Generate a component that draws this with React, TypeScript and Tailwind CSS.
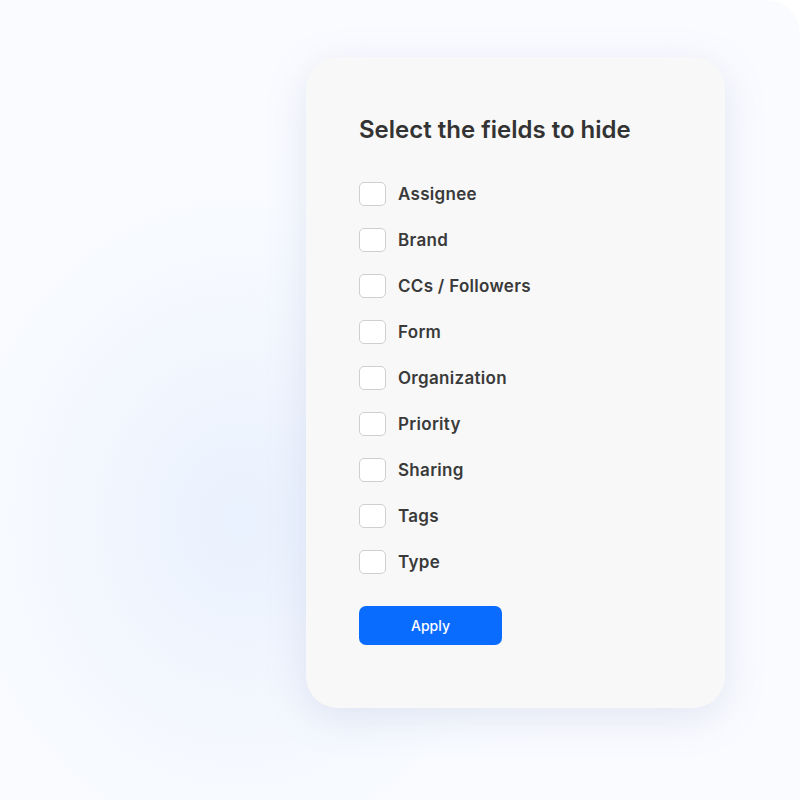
import React from "react";

const fields = ["Assignee", "Brand", "CCs / Followers", "Form", "Organization", "Priority", "Sharing", "Tags", "Type"];

export default function App() {
  return (
    <div className="w-[800px] h-[800px] bg-white overflow-hidden" style={{ fontFamily: "Inter, 'Noto Sans', sans-serif" }}>
      <div className="w-[800px] h-[800px] rounded-tr-[34px] bg-[radial-gradient(ellipse_360px_420px_at_240px_520px,#e9f1fe_0%,#f3f7fe_45%,#f9fbff_80%,#fafbff_100%)] pl-[306px] pt-[57px]">
        <div className="w-[419px] h-[651px] rounded-[32px] bg-[#f8f8f8] shadow-[0_10px_40px_rgba(120,140,190,0.18)] pl-[53px] pt-[58px] flex flex-col">
          <h1 className="text-[24px] leading-[30px] font-semibold text-[#333333] tracking-[0px]">Select the fields to hide</h1>
          <div className="flex flex-col gap-[22px] mt-[37px]">
            {fields.map((f) => (
              <label key={f} className="flex items-center h-[24px]">
                <span className="w-[27px] h-[24px] rounded-[5px] border border-[#cfcfcf] bg-white shrink-0" />
                <span className="ml-[12px] text-[17px] font-semibold text-[#3a3a3a] leading-[24px] tracking-[0.3px]">{f}</span>
              </label>
            ))}
          </div>
          <button className="mt-[32px] w-[143px] h-[39px] rounded-[7px] bg-[#0a6cff] text-white text-[14px] font-medium">Apply</button>
        </div>
      </div>
    </div>
  );
}
